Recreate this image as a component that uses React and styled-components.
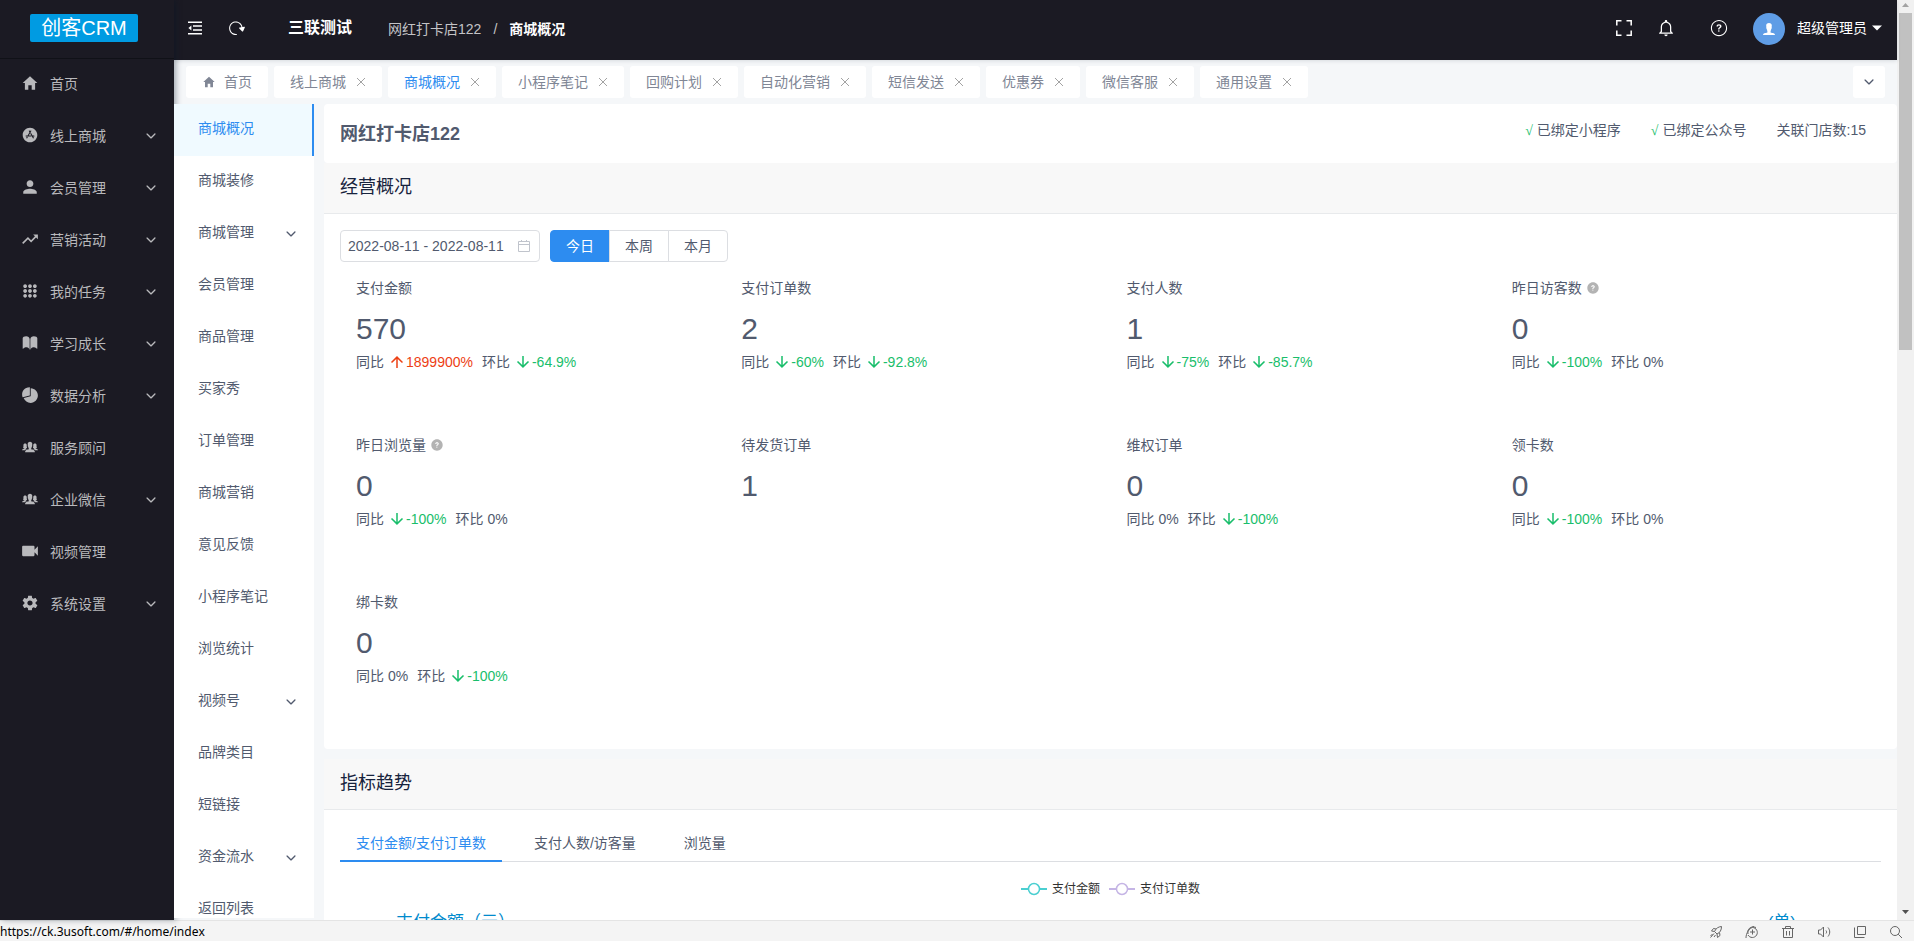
import React from 'react';
import styled, { createGlobalStyle, css } from 'styled-components';
import {
  IoMdHome, IoIosAppstore, IoMdPerson, IoIosPerson, IoMdTrendingUp, IoIosKeypad, IoIosBook,
  IoIosPie, IoIosPeople, IoMdVideocam, IoMdSettings, IoIosArrowDown, IoMdArrowDown,
  IoMdArrowUp, IoIosRefresh, IoIosHelpCircleOutline, IoIosHelpCircle,
  IoMdNotificationsOutline, IoMdArrowDropdown,
} from 'react-icons/io';

const GlobalStyle = createGlobalStyle`
  *, *::before, *::after { box-sizing: border-box; }
  body {
    margin: 0;
    font-family: "Liberation Sans", "Noto Sans CJK SC", sans-serif;
    font-size: 14px;
    font-kerning: none;
    line-height: 20px;
    color: #515a6e;
    background: #f5f7f9;
  }
  h1, h2, p, ul, dl, dd { margin: 0; padding: 0; }
  ul { list-style: none; }
  a { color: inherit; text-decoration: none; }
  button, input { font: inherit; color: inherit; }
  button { border: 0; padding: 0; background: none; cursor: pointer; }
  svg { display: block; flex: none; }
`;

/* ---------- frame ---------- */
const Window = styled.div`
  display: flex;
  flex-direction: column;
  height: 100vh;
  overflow: hidden;
`;
const Workspace = styled.div`
  display: flex;
  flex: 1;
  min-height: 0;
`;
const Page = styled.div`
  display: flex;
  flex-direction: column;
  flex: 1;
  min-width: 0;
`;
const Body = styled.div`
  display: flex;
  flex: 1;
  min-height: 0;
`;

/* ---------- sidebar ---------- */
const Sidebar = styled.aside`
  position: relative;
  z-index: 1;
  flex: none;
  width: 174px;
  background: #1b1a23;
  box-shadow: 2px 0 6px rgba(0, 21, 41, 0.35);
`;
const Brand = styled.div`
  display: flex;
  justify-content: center;
  height: 59px;
  padding: 14px 6px 0 0;
  border-bottom: 1px solid #101117;
`;
const Logo = styled.a`
  width: 108px;
  height: 28px;
  border-radius: 2px;
  background: #009be2;
  color: #fff;
  font-size: 20px;
  line-height: 28px;
  text-align: center;
`;
const MenuLink = styled.a`
  display: flex;
  align-items: center;
  gap: 11px;
  height: 52px;
  padding: 0 16px 4px 21px;
  color: #b9b9bc;
  span { flex: 1; padding-top: 2px; }
`;
const MenuArrow = styled(IoIosArrowDown)`
  box-sizing: content-box;
  padding-top: 2px;
`;

/* ---------- header ---------- */
const Header = styled.header`
  position: relative;
  display: flex;
  flex: none;
  align-items: center;
  justify-content: space-between;
  height: 60px;
  padding: 0 10px 4px 12px;
  background: #1b1a23;
  color: #fff;
  box-shadow: 0 1px 4px rgba(0, 21, 41, 0.12);
`;
const HeaderSide = styled.div`
  display: flex;
  align-items: center;
`;
const IconButton = styled.button`
  display: flex;
  align-items: center;
  justify-content: center;
  width: ${(p) => p.$width}px;
  height: 32px;
  color: #fff;
`;
const Turned = styled.span`
  transform: rotate(80deg);
`;
const ShopName = styled.strong`
  margin-left: 18px;
  font-size: 16px;
`;
const Crumbs = styled.nav`
  display: flex;
  gap: 12px;
  margin-left: 36px;
  padding-top: 2px;
  color: #c4c4c7;
  strong { color: #fff; }
`;
const Avatar = styled.span`
  display: flex;
  align-items: center;
  justify-content: center;
  width: 32px;
  height: 32px;
  margin: 2px 12px 0 7px;
  border-radius: 50%;
  background: #5f9de6;
`;
const UserButton = styled.button`
  display: flex;
  align-items: center;
  color: #fff;
`;

/* ---------- page tabs ---------- */
const TabBar = styled.div`
  display: flex;
  flex: none;
  gap: 6px;
  height: 44px;
  padding: 6px 12px;
`;
const PageTab = styled.div`
  display: flex;
  align-items: center;
  height: 32px;
  padding: ${(p) => (p.$closable ? '0 16px' : '0 16px')};
  border-radius: 3px;
  background: #fff;
  color: ${(p) => (p.$active ? '#2d8cf0' : '#808695')};
  a { display: flex; align-items: center; gap: 8px; }
  button { margin-left: 10px; color: #a3a3a3; }
`;
const MoreTabs = styled.button`
  display: flex;
  align-items: center;
  justify-content: center;
  width: 32px;
  height: 32px;
  margin-left: auto;
  border-radius: 3px;
  background: #fff;
`;

/* ---------- second level menu ---------- */
const SubMenu = styled.nav`
  position: relative;
  z-index: 2;
  flex: none;
  width: 140px;
  margin-bottom: 2px;
  overflow: hidden;
  background: #fff;
`;
const SubLink = styled.a`
  display: flex;
  align-items: center;
  justify-content: space-between;
  height: 52px;
  padding: 0 16px 0 24px;
  span { padding-bottom: 4px; }
  ${(p) => p.$active && css`
    padding-right: 14px;
    border-right: 2px solid #2d8cf0;
    background: #f0faff;
    color: #2d8cf0;
  `}
`;

/* ---------- content ---------- */
const Content = styled.main`
  display: flex;
  flex-direction: column;
  flex: 1;
  min-width: 0;
  margin-left: 10px;
  overflow: hidden;
`;
const ShopBar = styled.div`
  display: flex;
  flex: none;
  justify-content: space-between;
  height: 59px;
  padding: 16px 31px 0 16px;
  border-radius: 4px;
  background: #fff;
  h1 { font-size: 18px; line-height: 28px; }
`;
const Bindings = styled.ul`
  display: flex;
  gap: 30px;
  line-height: 20px;
`;
const Tick = styled.span`
  margin-right: 4px;
  color: #19be6b;
  font-family: "Liberation Serif", serif;
`;
const Card = styled.section`
  flex: none;
  margin-bottom: 10px;
  border-radius: 4px;
  background: #fff;
`;
const CardTitle = styled.h2`
  height: 51px;
  padding: 10px 16px;
  border-bottom: 1px solid #e8eaec;
  background: #f8f8f8;
  color: #17233d;
  font-size: 18px;
  font-weight: 400;
  line-height: 28px;
`;
const CardBody = styled.div`
  padding: 16px 16px 6px;
`;
const Filters = styled.div`
  display: flex;
  gap: 10px;
  margin-bottom: 10px;
`;
const DateField = styled.label`
  display: flex;
  align-items: center;
  width: 200px;
  height: 32px;
  padding: 0 8px 0 7px;
  border: 1px solid #dcdee2;
  border-radius: 4px;
  input {
    flex: 1;
    min-width: 0;
    padding: 0;
    border: 0;
    outline: 0;
    background: none;
    font-kerning: none;
  }
`;
const Ranges = styled.div`
  display: flex;
`;
const RangeButton = styled.button`
  width: 60px;
  height: 32px;
  border: 1px solid ${(p) => (p.$active ? '#2d8cf0' : '#dcdee2')};
  background: ${(p) => (p.$active ? '#2d8cf0' : '#fff')};
  color: ${(p) => (p.$active ? '#fff' : '#515a6e')};
  & + & { margin-left: -1px; }
  &:first-child { border-radius: 4px 0 0 4px; }
  &:last-child { border-radius: 0 4px 4px 0; }
`;
const Stats = styled.div`
  display: grid;
  grid-template-columns: repeat(4, 1fr);
  grid-auto-rows: 157px;
`;
const Stat = styled.div`
  padding: 4px 16px;
`;
const StatLabel = styled.p`
  display: flex;
  align-items: center;
  gap: 4px;
  line-height: 24px;
  svg { color: #b3b3b3; }
`;
const StatValue = styled.p`
  margin-top: 8px;
  font-size: 30px;
  line-height: 42px;
`;
const Ratios = styled.p`
  display: flex;
  gap: 9px;
  line-height: 24px;
`;
const Ratio = styled.span`
  display: flex;
  gap: 4px;
`;
const Change = styled.span`
  display: flex;
  align-items: center;
  color: ${(p) => ({ up: '#ed4014', down: '#19be6b' }[p.$trend] || 'inherit')};
`;

/* ---------- trend chart ---------- */
const ChartTabs = styled.div`
  display: flex;
  gap: 16px;
  height: 36px;
  border-bottom: 1px solid #dcdee2;
`;
const ChartTab = styled.button`
  height: 36px;
  padding: 0 16px;
  border-bottom: 2px solid ${(p) => (p.$active ? '#2d8cf0' : 'transparent')};
  color: ${(p) => (p.$active ? '#2d8cf0' : 'inherit')};
`;
const Legend = styled.ul`
  display: flex;
  justify-content: center;
  gap: 9px;
  padding-top: 17px;
  color: #333;
  font-size: 12px;
  li { display: flex; align-items: center; gap: 5px; }
`;
const AxisTitles = styled.div`
  display: flex;
  justify-content: space-between;
  padding: 12px 85px 0 56px;
  color: #008acd;
  font-size: 17px;
  line-height: 24px;
`;

/* ---------- scroll bar ---------- */
const ScrollTrack = styled.div`
  display: flex;
  flex: none;
  flex-direction: column;
  align-items: center;
  justify-content: space-between;
  width: 17px;
  background: #f1f1f1;
`;
const ScrollTop = styled.div`
  display: flex;
  flex-direction: column;
  align-items: center;
  width: 13px;
  height: 38%;
`;
const ScrollThumb = styled.div`
  flex: 1;
  width: 13px;
  background: #c1c1c1;
`;
const ScrollArrow = styled.svg`
  width: 9px;
  height: ${(p) => p.$height}px;
`;

/* ---------- status bar ---------- */
const StatusBar = styled.footer`
  display: flex;
  flex: none;
  align-items: center;
  justify-content: space-between;
  height: 21px;
  padding: 1px 10px 0 0;
  border-top: 1px solid #e4e4e4;
  background: #f4f4f4;
  color: #000;
  font-family: "Noto Sans", sans-serif;
  font-size: 12px;
`;
const StatusTools = styled.div`
  display: flex;
  gap: 20px;
  color: #666;
`;

const menu = [
  ['首页', IoMdHome, false],
  ['线上商城', IoIosAppstore, true],
  ['会员管理', IoMdPerson, true],
  ['营销活动', IoMdTrendingUp, true],
  ['我的任务', IoIosKeypad, true],
  ['学习成长', IoIosBook, true],
  ['数据分析', IoIosPie, true],
  ['服务顾问', IoIosPeople, false],
  ['企业微信', IoIosPeople, true],
  ['视频管理', IoMdVideocam, false],
  ['系统设置', IoMdSettings, true],
];

const subMenu = [
  '商城概况', '商城装修', '商城管理', '会员管理', '商品管理', '买家秀', '订单管理', '商城营销',
  '意见反馈', '小程序笔记', '浏览统计', '视频号', '品牌类目', '短链接', '资金流水', '返回列表',
];
const expandable = ['商城管理', '视频号', '资金流水'];

const pageTabs = [
  '线上商城', '商城概况', '小程序笔记', '回购计划', '自动化营销', '短信发送', '优惠券', '微信客服', '通用设置',
];

const stats = [
  { label: '支付金额', value: '570', yoy: ['up', '1899900%'], mom: ['down', '-64.9%'] },
  { label: '支付订单数', value: '2', yoy: ['down', '-60%'], mom: ['down', '-92.8%'] },
  { label: '支付人数', value: '1', yoy: ['down', '-75%'], mom: ['down', '-85.7%'] },
  { label: '昨日访客数', value: '0', help: true, yoy: ['down', '-100%'], mom: ['flat', '0%'] },
  { label: '昨日浏览量', value: '0', help: true, yoy: ['down', '-100%'], mom: ['flat', '0%'] },
  { label: '待发货订单', value: '1' },
  { label: '维权订单', value: '0', yoy: ['flat', '0%'], mom: ['down', '-100%'] },
  { label: '领卡数', value: '0', yoy: ['down', '-100%'], mom: ['flat', '0%'] },
  { label: '绑卡数', value: '0', yoy: ['flat', '0%'], mom: ['down', '-100%'] },
];

const FoldIcon = () => (
  <svg width="14" height="14" viewBox="0 0 14 14" fill="none" stroke="currentColor" strokeWidth="1.5">
    <path d="M0 1.2h14M5 5h9M5 9h9M0 12.8h14" />
    <path d="M3.4 4.6v4.8L.4 7z" fill="currentColor" stroke="none" />
  </svg>
);

const ExpandIcon = () => (
  <svg width="16" height="16" viewBox="0 0 16 16" fill="none" stroke="currentColor" strokeWidth="1.5">
    <path d="M.8 5.500V.8h4.700M10.500.8h4.700v4.700M15.200 10.500v4.700h-4.700M5.500 15.200H.8v-4.700" />
  </svg>
);

const CloseIcon = () => (
  <svg width="10" height="10" viewBox="0 0 10 10" fill="none" stroke="currentColor">
    <path d="M1 1l8 8M9 1l-8 8" />
  </svg>
);

const CalendarIcon = () => (
  <svg width="14" height="14" viewBox="0 0 14 14" fill="none" stroke="#c0c4cc">
    <path d="M1.500 2.500h11v10h-11zM1.500 5.500h11M4.500 1v2M9.500 1v2" />
  </svg>
);

const LegendMark = ({ color }) => (
  <svg width="26" height="14" viewBox="0 0 26 14" fill="#fff" stroke={color} strokeWidth="2">
    <path d="M0 7h26" />
    <circle cx="13" cy="7" r="5.5" strokeWidth="1.5" />
  </svg>
);

const statusIcons = [
  ['加速', 'M12.5 1.5c-3 .2-5.500 1.700-7 5l2.500 2.500c3.200-1.500 4.500-4 4.500-7.500zM5.500 6.500l-3-.5 2-2.500 2.500.5M8 9l.5 3.500 2.500-2 -.5-3M5 8.500l-3.500 4M6.500 10l-1.500 2M3.500 9l-2 2'],
  ['兼容模式', 'M1 13c0-5 3-9.500 8-11.500M7.500 2.500a5 5 0 1 1-4.500 7.500M3 9a5.500 5.500 0 0 1 8-6.500M7.500 4.500v5M5 7h5'],
  ['清理', 'M1 3.500h12M4.500 3.500v-2h5v2M2.500 3.500v9h9v-9M5.500 6v4.500M8.500 6v4.500'],
  ['声音', 'M1.500 5v4h2l3 3V2l-3 3zM9 5.500c.8 1 .8 2 0 3M11 2.500c2.300 2.700 2.300 6.300 0 9'],
  ['窗口', 'M4.500 1.500h8v8h-8zM1.500 2.500v10h10'],
  ['缩放', 'M10.500 6a4.500 4.500 0 1 1-9 0a4.500 4.500 0 0 1 9 0zM9.200 9.200l3.800 3.800'],
];

const RatioItem = ({ name, data: [trend, text] }) => (
  <Ratio>
    {name}
    <Change $trend={trend}>
      {trend === 'up' && <IoMdArrowUp size={18} />}
      {trend === 'down' && <IoMdArrowDown size={18} />}
      {text}
    </Change>
  </Ratio>
);

export default function App() {
  return (
    <Window>
      <GlobalStyle />
      <Workspace>
        <Sidebar>
          <Brand><Logo href="#">创客CRM</Logo></Brand>
          <nav>
            {menu.map(([label, Icon, more]) => (
              <MenuLink key={label} href="#">
                <Icon size={18} />
                <span>{label}</span>
                {more && <MenuArrow size={14} />}
              </MenuLink>
            ))}
          </nav>
        </Sidebar>

        <Page>
          <Header>
            <HeaderSide>
              <IconButton $width={18} aria-label="收起菜单"><FoldIcon /></IconButton>
              <IconButton $width={66} aria-label="刷新">
                <Turned><IoIosRefresh size={18} /></Turned>
              </IconButton>
              <ShopName>三联测试</ShopName>
              <Crumbs>
                <a href="#">网红打卡店122</a>
                <span>/</span>
                <strong>商城概况</strong>
              </Crumbs>
            </HeaderSide>
            <HeaderSide>
              <IconButton $width={32} aria-label="全屏"><ExpandIcon /></IconButton>
              <IconButton $width={52} aria-label="通知"><IoMdNotificationsOutline size={20} /></IconButton>
              <IconButton $width={54} aria-label="帮助"><IoIosHelpCircleOutline size={20} /></IconButton>
              <UserButton>
                <Avatar><IoIosPerson size={16} /></Avatar>
                超级管理员
                <IoMdArrowDropdown size={20} />
              </UserButton>
            </HeaderSide>
          </Header>

          <TabBar>
            <PageTab>
              <a href="#"><IoMdHome size={14} />首页</a>
            </PageTab>
            {pageTabs.map((label) => (
              <PageTab key={label} $closable $active={label === '商城概况'}>
                <a href="#">{label}</a>
                <button aria-label={`关闭${label}`}><CloseIcon /></button>
              </PageTab>
            ))}
            <MoreTabs aria-label="更多标签"><IoIosArrowDown size={14} /></MoreTabs>
          </TabBar>

          <Body>
            <SubMenu>
              {subMenu.map((label, i) => (
                <SubLink key={label} href="#" $active={i === 0}>
                  <span>{label}</span>
                  {expandable.includes(label) && <IoIosArrowDown size={14} />}
                </SubLink>
              ))}
            </SubMenu>

            <Content>
              <ShopBar>
                <h1>网红打卡店122</h1>
                <Bindings>
                  <li><Tick>√</Tick>已绑定小程序</li>
                  <li><Tick>√</Tick>已绑定公众号</li>
                  <li>关联门店数:15</li>
                </Bindings>
              </ShopBar>

              <Card>
                <CardTitle>经营概况</CardTitle>
                <CardBody>
                  <Filters>
                    <DateField>
                      <input aria-label="日期范围" readOnly value="2022-08-11 - 2022-08-11" />
                      <CalendarIcon />
                    </DateField>
                    <Ranges>
                      <RangeButton $active>今日</RangeButton>
                      <RangeButton>本周</RangeButton>
                      <RangeButton>本月</RangeButton>
                    </Ranges>
                  </Filters>
                  <Stats>
                    {stats.map((s) => (
                      <Stat key={s.label}>
                        <StatLabel>{s.label}{s.help && <IoIosHelpCircle size={14} />}</StatLabel>
                        <StatValue>{s.value}</StatValue>
                        {s.yoy && (
                          <Ratios>
                            <RatioItem name="同比" data={s.yoy} />
                            <RatioItem name="环比" data={s.mom} />
                          </Ratios>
                        )}
                      </Stat>
                    ))}
                  </Stats>
                </CardBody>
              </Card>

              <Card>
                <CardTitle>指标趋势</CardTitle>
                <CardBody>
                  <ChartTabs>
                    <ChartTab $active>支付金额/支付订单数</ChartTab>
                    <ChartTab>支付人数/访客量</ChartTab>
                    <ChartTab>浏览量</ChartTab>
                  </ChartTabs>
                  <Legend>
                    <li><LegendMark color="#4bcfd1" />支付金额</li>
                    <li><LegendMark color="#c5b5e5" />支付订单数</li>
                  </Legend>
                  <AxisTitles>
                    <span>支付金额（元）</span>
                    <span>(单)</span>
                  </AxisTitles>
                </CardBody>
              </Card>
            </Content>
          </Body>
        </Page>

        <ScrollTrack>
          <ScrollTop>
            <ScrollArrow $height={13} viewBox="0 0 9 13"><path d="M1 7l3.500-4 3.500 4z" fill="#a3a3a3" /></ScrollArrow>
            <ScrollThumb />
          </ScrollTop>
          <ScrollArrow $height={17} viewBox="0 0 9 17"><path d="M1 7l3.500 4 3.500-4z" fill="#505050" /></ScrollArrow>
        </ScrollTrack>
      </Workspace>

      <StatusBar>
        <span>https://ck.3usoft.com/#/home/index</span>
        <StatusTools>
          {statusIcons.map(([name, d]) => (
            <button key={name} aria-label={name}>
              <svg width="16" height="16" viewBox="-1 -1 16 16" fill="none" stroke="#666"><path d={d} /></svg>
            </button>
          ))}
        </StatusTools>
      </StatusBar>
    </Window>
  );
}
